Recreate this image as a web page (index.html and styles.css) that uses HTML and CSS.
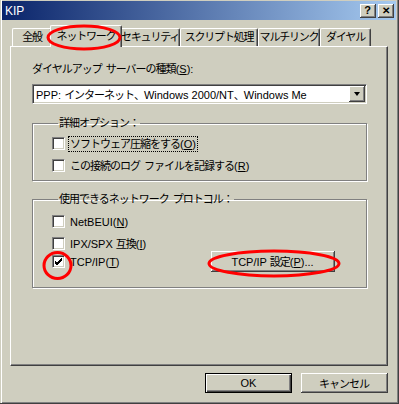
FILE: index.html
```html
<!DOCTYPE html>
<html>
<head>
<meta charset="utf-8">
<title>KIP</title>
<link rel="stylesheet" href="styles.css">
</head>
<body>
<div class="window">
  <div class="titlebar">
    <span class="title">KIP</span>
    <span class="tbtn">?</span>
    <span class="tbtn close">✕</span>
  </div>
  <ul class="tabs">
    <li class="t1">全般</li>
    <li class="t2 on">ネットワーク</li>
    <li class="t3">セキュリティ</li>
    <li class="t4">スクリプト処理</li>
    <li class="t5">マルチリンク</li>
    <li class="t6">ダイヤル</li>
  </ul>
  <div class="panel">
    <p class="lbl">ダイヤルアップ<span class="sp"> </span>サーバーの種類<span class="en">(<u>S</u>):</span></p>
    <div class="combo">
      <span class="combo-text"><span class="en">PPP: </span>インターネット、<span class="en">Windows 2000/NT</span>、<span class="en">Windows Me</span></span>
      <span class="combo-btn"><i class="arrow"></i></span>
    </div>
    <fieldset class="grp g1">
      <legend>詳細オプション：</legend>
      <div class="row"><span class="cb"></span><span class="txt focus">ソフトウェア圧縮をする<span class="en">(<u>O</u>)</span></span></div>
      <div class="row"><span class="cb"></span><span class="txt">この接続のログ<span class="sp"> </span>ファイルを記録する<span class="en">(<u>R</u>)</span></span></div>
    </fieldset>
    <fieldset class="grp g2">
      <legend>使用できるネットワーク<span class="sp"> </span>プロトコル：</legend>
      <div class="row"><span class="cb"></span><span class="txt en">NetBEUI(<u>N</u>)</span></div>
      <div class="row"><span class="cb"></span><span class="txt"><span class="en">IPX/SPX </span>互換<span class="en">(<u>I</u>)</span></span></div>
      <div class="row last">
        <span class="cb checked"><svg width="9" height="9" viewBox="0 0 9 9"><path d="M1 4 L3 6 L8 1 M1 5 L3 7 L8 2 M1 6 L3 8 L8 3" stroke="#000" stroke-width="1" fill="none"/></svg></span>
        <span class="txt en">TCP/IP(<u>T</u>)</span>
        <span class="btn setup"><span><span class="en">TCP/IP </span>設定<span class="en">(<u>P</u>)...</span></span></span>
      </div>
    </fieldset>
  </div>
  <div class="actions">
    <span class="btn def en">OK</span>
    <span class="btn">キャンセル</span>
  </div>
  <svg class="marks" width="399" height="404">
    <ellipse cx="84" cy="37.5" rx="36" ry="11.5" />
    <ellipse cx="57.5" cy="265.5" rx="13.5" ry="13" />
    <ellipse cx="274" cy="263.5" rx="65" ry="12.5" />
  </svg>
</div>
</body>
</html>
```

FILE: styles.css
```css
body{ margin:0; background:#cfcebf;}
ul,li,p{ margin:0; padding:0; list-style:none;}
.window{ position:relative; width:399px; height:404px; box-sizing:border-box; padding:1px 2px 0 2px; background:#cfcebf; border-right:1px solid #404040; border-bottom:1px solid #404040; box-shadow:inset 1px 0 0 #cfcebf, inset 2px 0 0 #fff, inset -1px -1px 0 #808080; font-family:"Liberation Sans","Noto Sans CJK JP",sans-serif; font-size:11px; color:#000; letter-spacing:-1px;}
.en{ letter-spacing:0;}
.sp{ letter-spacing:1px;}
.titlebar{ display:flex; align-items:center; height:19px; padding:0 2px 0 3px; background:linear-gradient(to right,#0a246a,#a6caf0);}
.title{ flex:1; color:#fff; font-size:12px; letter-spacing:0;}
.tbtn{ width:16px; height:14px; margin-left:2px; box-sizing:border-box; background:#cfcebf; border-right:1px solid #404040; border-bottom:1px solid #404040; box-shadow:inset 1px 1px 0 #fff, inset -1px -1px 0 #808080; text-align:center; font-weight:bold; font-size:11px; line-height:13px; letter-spacing:0;}
.tbtn.close{ font-size:10px;}
.tabs{ display:flex; align-items:flex-end; height:26px; padding-left:10px; position:relative; z-index:1;}
.tabs li{ height:18px; box-sizing:border-box; border-top:1px solid #fff; border-left:1px solid #fff; border-right:1px solid #404040; border-radius:2px 2px 0 0; box-shadow:inset -1px 0 0 #808080; text-align:center; line-height:17px; letter-spacing:-1.2px; white-space:nowrap;}
.tabs li.on{ height:22px; margin:0 -2px -1px -2px; background:#cfcebf; line-height:20px; position:relative;}
.t1{ width:40px;} .t2{ width:72px;} .t3{ width:60px;} .t4{ width:78px;} .t5{ width:62px;} .t6{ width:51px;}
.panel{ height:320px; box-sizing:border-box; margin:0 8px 0 8px; padding:15px 20px 0 21px; border-top:1px solid #fff; border-left:1px solid #fff; border-right:1px solid #404040; border-bottom:1px solid #404040; box-shadow:inset -1px -1px 0 #808080;}
.lbl{ line-height:14px;}
.combo{ display:flex; align-items:center; height:20px; margin-top:8px; box-sizing:border-box; background:#fff; border-top:1px solid #808080; border-left:1px solid #808080; border-right:1px solid #fff; border-bottom:1px solid #fff; box-shadow:inset 1px 1px 0 #404040, inset -1px -1px 0 #cfcebf;}
.combo-text{ flex:1; padding-left:3px; white-space:nowrap;}
.combo-btn{ display:flex; align-items:center; justify-content:center; width:16px; height:16px; margin-right:1px; box-sizing:border-box; background:#cfcebf; border-right:1px solid #404040; border-bottom:1px solid #404040; box-shadow:inset 1px 1px 0 #fff, inset -1px -1px 0 #808080;}
.arrow{ width:0; height:0; border-left:3.5px solid transparent; border-right:3.5px solid transparent; border-top:4px solid #000;}
.grp{ margin:13px 0 0 0; padding:0 0 8px 19px; border:1px solid #808080; box-shadow:1px 1px 0 #fff, inset 1px 1px 0 #fff;}
.grp legend{ margin-left:6px; padding:0 1px; line-height:13px;}
.g2{ margin-top:12px; padding-bottom:15px;}
.row{ display:flex; align-items:center; height:13px; margin-top:9px; white-space:nowrap;}
.g1 .row:first-of-type{ margin-top:7px;}
.row.last{ height:21px; margin-top:1px;}
.cb{ display:flex; align-items:center; justify-content:center; width:13px; height:13px; box-sizing:border-box; background:#fff; border-top:1px solid #808080; border-left:1px solid #808080; border-right:1px solid #fff; border-bottom:1px solid #fff; box-shadow:inset 1px 1px 0 #404040, inset -1px -1px 0 #cfcebf;}
.txt{ margin-left:4px; padding:0 1px; line-height:14px;}
.focus{ outline:1px dotted #000;}
.btn{ display:flex; align-items:center; justify-content:center; height:21px; box-sizing:border-box; background:#cfcebf; border-right:1px solid #404040; border-bottom:1px solid #404040; box-shadow:inset 1px 1px 0 #fff, inset -1px -1px 0 #808080; white-space:nowrap;}
.setup{ width:124px; margin-left:auto; margin-right:31px;}
.actions{ display:flex; justify-content:flex-end; gap:9px; margin-top:7px; padding-right:8px;}
.actions .btn{ width:87px; height:20px;}
.btn.def{ border:1px solid #000; box-shadow:inset 1px 1px 0 #fff, inset -1px -1px 0 #404040, inset -2px -2px 0 #808080;}
.marks{ position:absolute; left:0; top:0; z-index:2; pointer-events:none;}
.marks ellipse{ fill:none; stroke:#f00; stroke-width:3;}
```
